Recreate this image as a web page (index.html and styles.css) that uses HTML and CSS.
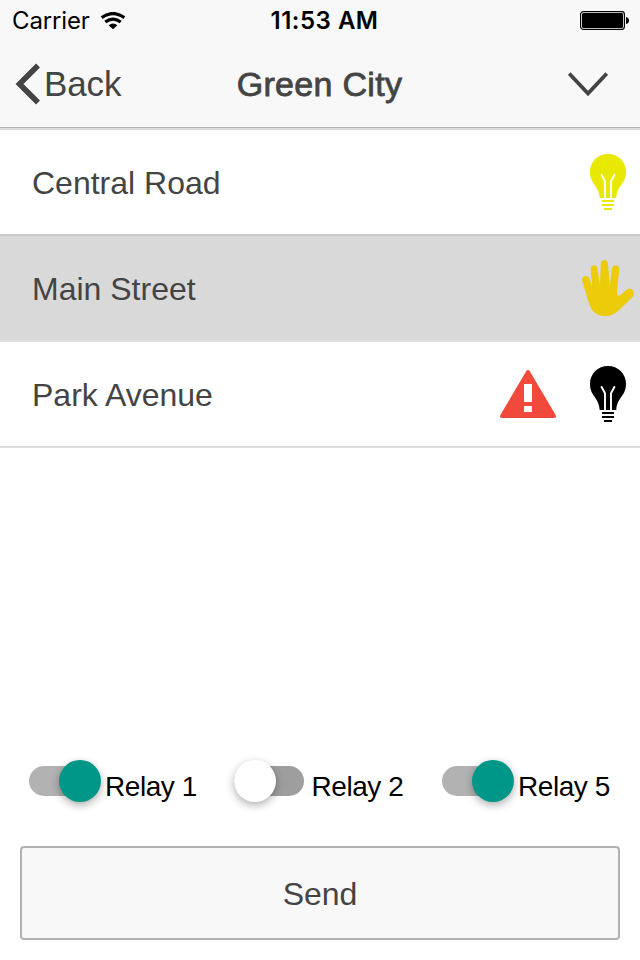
FILE: index.html
```html
<!DOCTYPE html>
<html lang="en">
<head>
<meta charset="utf-8">
<title>Green City</title>
<link rel="stylesheet" href="styles.css">
</head>
<body>
<svg class="defs" width="0" height="0" aria-hidden="true">
  <symbol id="bulb" viewBox="0 0 36 56">
    <path fill="currentColor" d="M18 0C8 0 0 7.700 0 17.700C0 30.500 9 31 9.700 44H26.300C27 31 36 30.500 36 17.700C36 7.700 28 0 18 0ZM12 46H24V48H12ZM12 50H24V52H12ZM14 54H22V56H14Z"/>
    <path class="filament" d="M11.200 20.300L15 27.300V44M24.800 20.300L21 27.300V44"/>
  </symbol>
</svg>
<header class="header">
  <div class="status">
    <div class="carrier"><span>Carrier</span>
      <svg width="26" height="18" viewBox="0 0 26 18"><g fill="none" stroke="#000" stroke-width="3.200"><path d="M1.700 5.600Q13 -2.600 24.300 5.600"/><path d="M5.300 10Q13 4.100 20.700 10"/></g><path d="M8.600 13.300Q13 9.800 17.400 13.300L13 17.200Z"/></svg>
    </div>
    <div class="time">11:53 AM</div>
    <svg class="battery" width="50" height="20" viewBox="0 0 50 20"><rect x=".6" y=".6" width="43.800" height="17.800" rx="2.800" fill="#fff" stroke="#000" stroke-width="1.200"/><rect x="2" y="2" width="41" height="15" rx="1.500"/><path d="M46 6Q49 6.500 49 9.500T46 13Z"/></svg>
  </div>
  <nav class="nav">
    <a class="back"><svg width="26" height="42" viewBox="0 0 26 42"><path d="M23 2.500L4.500 21L23 39.500" fill="none" stroke="#444" stroke-width="5.600"/></svg><span>Back</span></a>
    <h1 class="title">Green City</h1>
    <svg class="chevron" width="40" height="25" viewBox="0 0 40 25"><path d="M1.200 1.500L20 21.500L38.800 1.500" fill="none" stroke="#444" stroke-width="3.800"/></svg>
  </nav>
</header>
<main class="list">
  <div class="row first"><span class="street">Central Road</span><svg class="bulb lit"><use href="#bulb"/></svg></div>
  <div class="row selected"><span class="street">Main Street</span>
    <svg class="hand" width="52" height="56" viewBox="0 0 52 56"><path fill="#eccb0b" d="M.2 21C-1 15.300 6 14.200 7.400 18.800L10.200 26.500L8.700 9.500C8.300 4.200 14.700 3.600 15.500 8.500L18 25L18.800 4C19 -1.300 25.800 -1.300 26 4L27.700 25L30.200 8.200C30.900 3.700 37.500 4.500 37.200 9.300L35 32C34.800 35.600 36.300 36.800 38.700 34.700L44 30.200C49.500 26 55 32.500 50.500 37C47 40.500 42.500 45 38.500 48.700C33 54 28.500 56 22.500 56C14 56 9 50.500 6.500 42Z"/></svg>
  </div>
  <div class="row"><span class="street">Park Avenue</span>
    <svg class="warning" width="56" height="48" viewBox="0 0 56 48"><path d="M26.200 1.300Q28 -1.500 29.800 1.300L55.500 44.700Q57 48 54 48H2Q-1 48 .5 44.700Z" fill="#f1493c"/><path d="M24 14H32V32H24ZM24 36H32V42H24Z" fill="#fff"/></svg>
    <svg class="bulb"><use href="#bulb"/></svg>
  </div>
</main>
<footer class="controls">
  <div class="relays">
    <label class="relay on"><span class="track"><span class="thumb"></span></span><span class="label">Relay 1</span></label>
    <label class="relay off"><span class="track"><span class="thumb"></span></span><span class="label">Relay 2</span></label>
    <label class="relay on"><span class="track"><span class="thumb"></span></span><span class="label">Relay 5</span></label>
  </div>
  <button class="send">Send</button>
</footer>
</body>
</html>
```
FILE: styles.css
```css
* { box-sizing: border-box; }
body {
  margin: 0;
  height: 960px;
  display: flex;
  flex-direction: column;
  overflow: hidden;
  background: #fff;
  color: #444;
  font-family: "Liberation Sans", Arial, sans-serif;
}
svg { display: block; flex: none; }
.defs { position: absolute; }
.header {
  height: 128px;
  background: #f8f8f8;
  border-bottom: 1px solid #b2b2b2;
}
.status {
  height: 40px;
  display: grid;
  grid-template-columns: 1fr auto 1fr;
  align-items: center;
  padding: 0 10px 0 12px;
  color: #000;
  font: 24px/40px Inter, sans-serif;
}
.carrier { display: flex; align-items: center; gap: 10px; letter-spacing: -.15px; }
.time { font-weight: 600; letter-spacing: .5px; padding: 1px 0 0 7px; }
.battery { justify-self: end; }
.nav {
  height: 87px;
  display: grid;
  grid-template-columns: 1fr auto 1fr;
  align-items: center;
  padding: 0 32px 0 15px;
}
.back { display: flex; align-items: center; gap: 3px; font-size: 35px; line-height: 42px; letter-spacing: -.1px; }
.back span { padding-top: 1px; }
.title {
  margin: 0;
  padding: 2px 0 0 17px;
  margin-right: 1px;
  font-size: 34px;
  font-weight: 400;
  letter-spacing: .3px;
  -webkit-text-stroke: .8px #444;
}
.chevron { justify-self: end; margin-top: 1px; }
.list { border-top: 2px solid #ddd; }
.row {
  height: 106px;
  display: flex;
  align-items: center;
  padding: 0 14px 0 32px;
  border-bottom: 2px solid #ddd;
}
.row.first { border-color: #ccc; }
.row.selected { background: #d9d9d9; padding-right: 6px; }
.street { flex: 1; padding-top: 2px; font-size: 32px; line-height: 40px; }
.bulb { width: 36px; height: 56px; color: #000; }
.bulb.lit { color: #e8e800; }
.filament { fill: none; stroke: #fff; stroke-width: 1.9; }
.warning { margin-right: 34px; }
.controls { margin-top: auto; padding: 0 20px 20px; }
.relays { display: flex; padding-left: 9px; height: 86px; }
.relay { display: flex; flex: none; width: 206.500px; height: 42px; color: #000; font-size: 28px; }
.relay:last-child { width: auto; }
.track {
  display: flex;
  flex: none;
  align-items: center;
  justify-content: flex-end;
  width: 70px;
  height: 30px;
  margin-top: 6px;
  border-radius: 15px;
  background: #b2b2b2;
}
.thumb {
  flex: none;
  width: 42px;
  height: 42px;
  margin-right: -2px;
  border-radius: 50%;
  background: #009688;
  box-shadow: 0 3px 8px rgba(0, 0, 0, .32);
}
.relay.off .track { justify-content: flex-start; background: #9e9e9e; margin-left: -1.500px; margin-right: 1.500px; }
.relay.off .thumb { background: #fff; margin: 0; }
.label { line-height: 32px; margin: 11px 0 0 6px; letter-spacing: -.45px; white-space: nowrap; }
.send {
  display: block;
  width: 100%;
  height: 94px;
  padding: 2px 0 0;
  border: 2px solid #b2b2b2;
  border-radius: 4px;
  background: #f8f8f8;
  color: #444;
  font: 32px "Liberation Sans", Arial, sans-serif;
}
```
